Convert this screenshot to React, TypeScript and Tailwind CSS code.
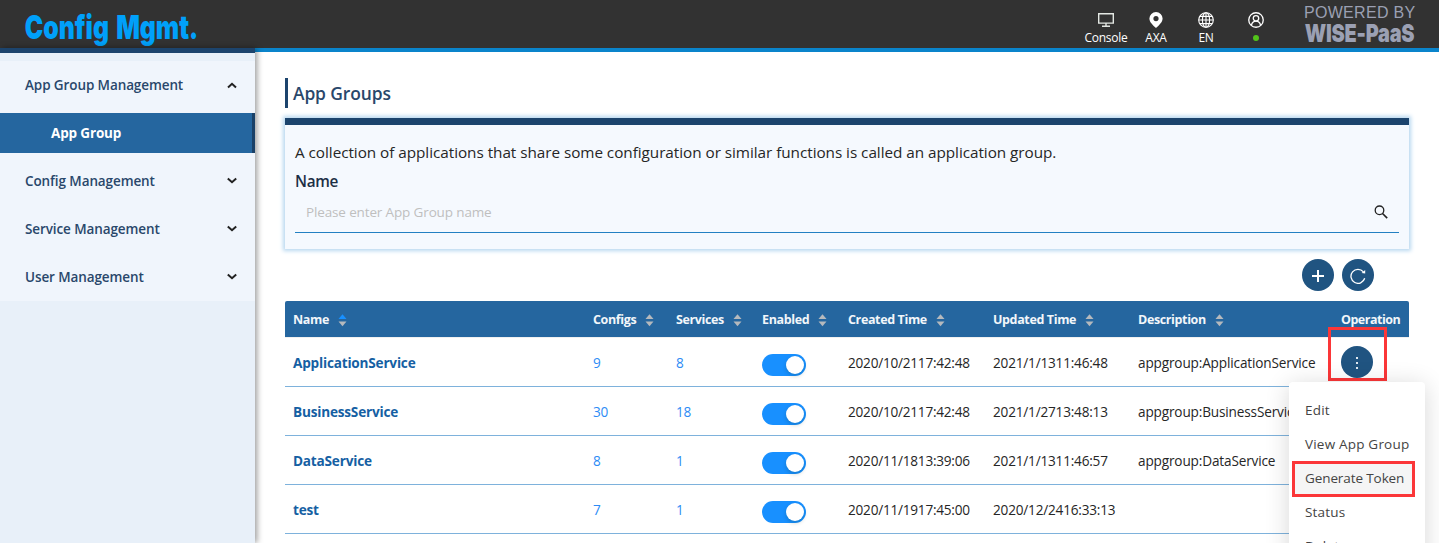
import { ReactNode } from "react";

const columns = [
  { label: "Name", sorted: true },
  { label: "Configs" },
  { label: "Services" },
  { label: "Enabled" },
  { label: "Created Time" },
  { label: "Updated Time" },
  { label: "Description" },
];

const rows = [
  { name: "ApplicationService", configs: 9, services: 8, created: "2020/10/2117:42:48", updated: "2021/1/1311:46:48", description: "appgroup:ApplicationService" },
  { name: "BusinessService", configs: 30, services: 18, created: "2020/10/2117:42:48", updated: "2021/1/2713:48:13", description: "appgroup:BusinessService" },
  { name: "DataService", configs: 8, services: 1, created: "2020/11/1813:39:06", updated: "2021/1/1311:46:57", description: "appgroup:DataService" },
  { name: "test", configs: 7, services: 1, created: "2020/11/1917:45:00", updated: "2020/12/2416:33:13", description: "" },
];

const grid = "grid grid-cols-[300px_83px_86px_86px_145px_145px_203px_76px]";

function SortIcon({ sorted }: { sorted?: boolean }) {
  return (
    <svg width="9" height="13" viewBox="0 0 9 13" className="shrink-0">
      <path d="M4.5 0.3 8.5 5H0.5z" fill={sorted ? "#1890ff" : "#b5b9bd"} />
      <path d="M4.5 12.2 8.5 7.5H0.5z" fill="#b5b9bd" />
    </svg>
  );
}

function Chevron({ up }: { up?: boolean }) {
  return (
    <svg width="10" height="8" viewBox="0 0 10 8" fill="none" stroke="#222" strokeWidth="2">
      <path d={up ? "M1 6.5 5 2.8 9 6.5" : "M0.8 1.5 5 5.2 9.2 1.5"} />
    </svg>
  );
}

function NavGroup({ label, open }: { label: string; open?: boolean }) {
  return (
    <div className="flex h-12 items-center justify-between pr-[18px] pl-[25px] text-[13.5px] font-semibold tracking-[-0.1px] text-[#29476b]">
      <span>{label}</span>
      <Chevron up={open} />
    </div>
  );
}

function HeaderItem({ icon, children }: { icon: ReactNode; children: ReactNode }) {
  return (
    <div className="flex w-[50px] flex-col items-center pt-[11px]">
      <div className="flex h-[18px] items-center justify-center">{icon}</div>
      <div className="flex h-[18px] items-center text-[12px] tracking-[-0.25px] whitespace-nowrap text-white">{children}</div>
    </div>
  );
}

function Toggle() {
  return (
    <span className="mt-[6px] flex h-[22px] w-11 items-center justify-end rounded-full bg-[#1890ff] p-0.5">
      <span className="size-[18px] rounded-full bg-white shadow-[0_2px_4px_rgba(0,35,11,0.2)]" />
    </span>
  );
}

export default function App() {
  return (
    <div className="relative flex h-[543px] w-[1439px] flex-col overflow-hidden bg-white font-['Open_Sans','Noto_Sans',sans-serif]">
      <header className="flex h-12 shrink-0 justify-between bg-[#323232]">
        <div className="w-[180px] origin-left scale-x-[0.75] pt-[9px] pl-[33px] font-['Inter',sans-serif] text-[33px] leading-[37px] font-black tracking-[0px] [word-spacing:3px] whitespace-nowrap text-[#00a0fa]">
          Config Mgmt.
        </div>
        <div className="flex">
          <HeaderItem
            icon={
              <svg width="16" height="14" viewBox="0 0 16 14" fill="none" stroke="#e4e8e4" strokeWidth="1.4">
                <path d="M0.7 0.7h14.6v9.4H0.7zM8 10v3M4 13.2h8" />
              </svg>
            }
          >
            Console
          </HeaderItem>
          <HeaderItem
            icon={
              <svg width="14" height="16" viewBox="0 0 14 16" fill="#fff" fillRule="evenodd">
                <path d="M7 0a6.6 6.6 0 0 1 6.6 6.5C13.6 10.2 10 13.3 7 16 4 13.3.4 10.2.4 6.5A6.6 6.6 0 0 1 7 0zM7 4a2.6 2.6 0 1 0 0 5.2A2.6 2.6 0 0 0 7 4z" />
              </svg>
            }
          >
            AXA
          </HeaderItem>
          <HeaderItem
            icon={
              <svg width="16" height="16" viewBox="0 0 16 16" fill="none" stroke="#fff" strokeWidth="1.1">
                <circle cx="8" cy="8" r="7.3" />
                <ellipse cx="8" cy="8" rx="3.6" ry="7.3" />
                <path d="M8 .7v14.6M.7 8h14.6M1.7 4.4h12.6M1.7 11.6h12.6" />
              </svg>
            }
          >
            EN
          </HeaderItem>
          <HeaderItem
            icon={
              <svg width="16" height="16" viewBox="0 0 17 17" fill="none" stroke="#fff" strokeWidth="1.4">
                <circle cx="8.5" cy="8.5" r="7.7" />
                <circle cx="8.5" cy="6.7" r="2.9" />
                <path d="M3.7 14c.5-2.8 2.3-4.3 4.8-4.3s4.3 1.5 4.8 4.3" />
              </svg>
            }
          >
            <span className="size-1.5 rounded-full bg-[#52c41a]" />
          </HeaderItem>
          <div className="ml-[23px] flex w-[135px] flex-col pt-[4px] text-[#9ba0b3]">
            <span className="font-['Liberation_Sans',sans-serif] text-[16px] leading-[17px] tracking-[0.3px] whitespace-nowrap">POWERED BY</span>
            <span className="w-[135px] origin-left scale-x-[0.795] pl-px font-['Inter',sans-serif] text-[25px] leading-[24px] font-black tracking-[-0.3px] whitespace-nowrap">
              WISE-PaaS
            </span>
          </div>
        </div>
      </header>

      <div className="flex min-h-0 flex-1">
        <aside className="z-10 w-[255px] shrink-0 border-t-[5px] border-[#1c446d] bg-[#e8f0f9] pt-2 shadow-[2px_0_6px_rgba(0,0,0,0.4)]">
          <nav className="bg-[#f0f5fc]">
            <NavGroup label="App Group Management" open />
            <div className="my-1 flex h-10 items-center border-r-[3px] border-[#1a4168] bg-[#25669f] pl-[51px] text-[13.5px] font-bold tracking-[-0.15px] text-white">
              App Group
            </div>
            <NavGroup label="Config Management" />
            <NavGroup label="Service Management" />
            <NavGroup label="User Management" />
          </nav>
        </aside>

        <main className="flex-1 border-t-4 border-[#0a84cb] pr-[30px] pl-[30px]">
          <h1 className="mt-[26px] flex h-[30px] items-center border-l-[3px] border-[#1c446d] pl-[5px] text-[17.4px] font-semibold tracking-[-0.1px] text-[#29476b]">
            App Groups
          </h1>

          <section className="mt-[10px] h-[131px] border-t-[7px] border-[#1c446d] bg-[#f5f9fe] px-[10px] pt-[16px] shadow-[0_0_4px_2px_#b9d8f0]">
            <p className="h-[22px] text-[15.3px] leading-[22px] tracking-[-0.045px] whitespace-nowrap text-[#262626]">
              A collection of applications that share some configuration or similar functions is called an application group.
            </p>
            <div className="mt-[6px] h-[24px] text-[15.3px] leading-[24px] font-semibold tracking-[-0.3px] text-[#1c2f45]">Name</div>
            <div className="mt-px flex h-[39px] items-center justify-between border-b border-[#2380c2] pr-[11px] pb-0.5 pl-[11px]">
              <span className="text-[13.5px] tracking-[-0.14px] text-[#bfbfbf]">Please enter App Group name</span>
              <svg width="14" height="14" viewBox="0 0 14 14" fill="none" stroke="#222" strokeWidth="1.3">
                <circle cx="5.5" cy="5.3" r="4.3" />
                <path d="m8.5 8.5 4.7 4.6" strokeWidth="1.6" />
              </svg>
            </div>
          </section>

          <div className="mt-[10px] flex h-8 justify-end gap-2 pr-[35px]">
            <button className="flex size-8 items-center justify-center rounded-full bg-[#205481]">
              <svg width="12" height="12" viewBox="0 0 12 12" stroke="#fff" strokeWidth="2" className="mt-0.5">
                <path d="M6 0v12M0 6h12" />
              </svg>
            </button>
            <button className="flex size-8 items-center justify-center rounded-full bg-[#205481]">
              <svg width="16" height="16" viewBox="0 0 16 16" fill="none" stroke="#fff" strokeWidth="1.3" className="mt-0.5">
                <path d="M13.4 3.9A7 7 0 1 0 14.7 10.3" />
                <path d="M15.2 2v3.6l-3.6-.5z" fill="#fff" stroke="none" />
              </svg>
            </button>
          </div>

          <div className="mt-[10px] w-[1124px] text-[13.6px] tracking-[-0.2px]">
            <div className={`${grid} h-[37px] items-center rounded-t-[2px] border-b border-[#f0f0f0] bg-[#25669f] text-[12.5px] font-bold text-[#f2f6fa]`}>
              {columns.map((column) => (
                <div key={column.label} className="flex items-center gap-[9px] pt-0.5 pl-2 tracking-[-0.37px] whitespace-nowrap">
                  <span>{column.label}</span>
                  <SortIcon sorted={column.sorted} />
                </div>
              ))}
              <div className="pt-0.5 pl-2 tracking-[-0.5px]">Operation</div>
            </div>
            {rows.map((row, index) => (
              <div key={row.name} className={`${grid} h-[49px] items-center border-b border-[#7eb2dc] whitespace-nowrap text-[#262626]`}>
                <div className="pt-[3px] pl-2 font-bold text-[#155fa3]">{row.name}</div>
                <div className="pt-[3px] pl-2 text-[#2d8cf5]">{row.configs}</div>
                <div className="pt-[3px] pl-2 text-[#2d8cf5]">{row.services}</div>
                <div className="pl-2">
                  <Toggle />
                </div>
                <div className="pt-[3px] pl-2 tracking-[-0.23px]">{row.created}</div>
                <div className="pt-[3px] pl-2">{row.updated}</div>
                <div className="pt-[3px] pl-2 tracking-[-0.15px]">{row.description}</div>
                <div className="pl-2">
                  {index === 0 && (
                    <button className="flex size-8 items-center justify-center rounded-full bg-[#205481]">
                      <svg width="2" height="12" viewBox="0 0 2 12" fill="#dfe8f0" className="mt-0.5">
                        <path d="M0 0h2v2H0zM0 5h2v2H0zM0 10h2v2H0z" />
                      </svg>
                    </button>
                  )}
                </div>
              </div>
            ))}
          </div>
        </main>
      </div>

      <div className="absolute top-[327px] left-[1328px] z-20 h-[54px] w-[59px] border-[3px] border-[#fb3638]" />
      <div className="absolute top-[382px] left-[1289px] z-20 h-[200px] w-[136px] rounded-sm bg-white pt-[11px] text-[13.5px] tracking-[0.2px] text-[#444] shadow-[0_3px_24px_rgba(0,0,0,0.16)]">
        {["Edit", "View App Group", "Generate Token", "Status", "Delete"].map((item) => (
          <div key={item} className="h-[34px] pl-4 leading-[34px] whitespace-nowrap">
            {item === "Generate Token" ? (
              <div className="-ml-[13px] flex h-9 w-[123px] items-center border-[3px] border-[#fb3638] bg-[#f5f5f5] pb-[3px] pl-[10px] tracking-[-0.1px]">{item}</div>
            ) : (
              item
            )}
          </div>
        ))}
      </div>
    </div>
  );
}
